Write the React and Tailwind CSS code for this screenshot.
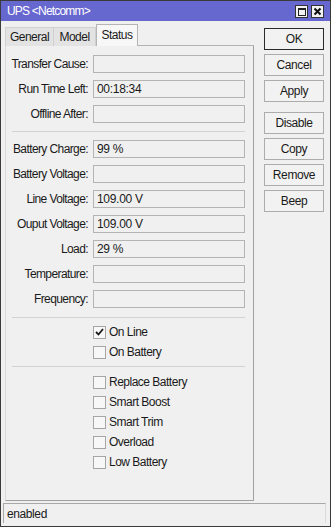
import React from "react";

const font = { fontFamily: '"Liberation Sans", Arial, sans-serif' };

function Field({ label, value }) {
  return (
    <div className="flex items-center h-[18px]">
      <div className="w-[82px] text-right text-[12px] tracking-[-0.6px] text-[#1a1a1a] leading-none">{label}</div>
      <div className="ml-[5px] w-[152px] h-[18px] border border-[#b4b4b4] bg-[#f0f0f0] flex items-center pl-[3px] text-[12px] tracking-[-0.3px] text-[#1a1a1a] leading-none">
        {value}
      </div>
    </div>
  );
}

function Check({ label, checked }) {
  return (
    <div className="flex items-center h-[20px] pl-[87px]">
      <div className="w-[13px] h-[13px] border border-[#a5a5a5] bg-[#f7f7f7] flex items-center justify-center">
        {checked && (
          <svg width="9" height="8" viewBox="0 0 9 8">
            <path d="M1 4 L3.5 6.5 L8 1" stroke="#1a1a1a" strokeWidth="1.8" fill="none" />
          </svg>
        )}
      </div>
      <div className="ml-[3px] text-[12px] tracking-[-0.5px] text-[#1a1a1a] leading-none">{label}</div>
    </div>
  );
}

function Sep() {
  return <div className="ml-[6px] w-[233px] border-t border-[#d2d2d2]" />;
}

function Btn({ children, def }) {
  return (
    <div
      className={
        "h-[22px] w-[60px] flex items-center justify-center text-[12px] tracking-[-0.4px] text-[#1a1a1a] leading-none bg-[#f2f2f2] border " +
        (def ? "border-[#2a2a2a]" : "border-[#acacac]")
      }
    >
      {children}
    </div>
  );
}

export default function App() {
  return (
    <div style={font} className="w-[331px] h-[527px] bg-[#f0f0f0] border border-[#3a3a3a] flex flex-col overflow-hidden">
      {/* Title bar */}
      <div className="h-[20px] bg-[#6767d0] flex items-center pl-[6px] pr-[6px] shrink-0">
        <div className="text-white text-[12px] tracking-[-0.8px] leading-none">UPS &lt;Netcomm&gt;</div>
        <div className="ml-auto flex gap-[3px] mt-[1px]">
          <div className="w-[13px] h-[13px] bg-[#f2f2f2] border border-[#333] flex items-center justify-center">
            <div className="w-[8px] h-[8px] border border-[#222] border-t-2" />
          </div>
          <div className="w-[13px] h-[13px] bg-[#f2f2f2] border border-[#333] flex items-center justify-center">
            <svg width="9" height="9" viewBox="0 0 9 9">
              <path d="M1.5 1.5 L7.5 7.5 M7.5 1.5 L1.5 7.5" stroke="#111" strokeWidth="2" />
            </svg>
          </div>
        </div>
      </div>

      {/* Body */}
      <div className="flex h-[480px] shrink-0">
        <div className="pl-[4px] flex flex-col">
          {/* Tabs */}
          <div className="h-[25px] flex items-end">
            <div className="w-[49px] h-[19px] bg-[#e3e3e3] border border-b-0 border-[#d0d0d0] flex items-center justify-center text-[12px] tracking-[-0.5px] text-[#1a1a1a] leading-none">
              General
            </div>
            <div className="w-[42px] h-[19px] bg-[#e3e3e3] border border-l-0 border-b-0 border-[#d0d0d0] flex items-center justify-center text-[12px] tracking-[-0.5px] text-[#1a1a1a] leading-none">
              Model
            </div>
            <div className="w-[42px] h-[22px] bg-[#f7f7f7] border border-b-0 border-[#b4b4b4] flex items-start pt-[4px] justify-center text-[12px] tracking-[-0.5px] text-[#1a1a1a] leading-none">
              Status
            </div>
            <div className="flex-1 border-b border-[#b4b4b4]" />
          </div>
          {/* Panel */}
          <div className="w-[249px] h-[455px] border border-t-0 border-l-[#d8d8d8] border-r-[#a0a0a0] border-b-[#a0a0a0] flex flex-col pt-[9px]">
            <div className="flex flex-col gap-[7px]">
              <Field label="Transfer Cause:" value="" />
              <Field label="Run Time Left:" value="00:18:34" />
              <Field label="Offline After:" value="" />
            </div>
            <div className="mt-[8px] mb-[8px]">
              <Sep />
            </div>
            <div className="flex flex-col gap-[7px]">
              <Field label="Battery Charge:" value="99 %" />
              <Field label="Battery Voltage:" value="" />
              <Field label="Line Voltage:" value="109.00 V" />
              <Field label="Ouput Voltage:" value="109.00 V" />
              <Field label="Load:" value="29 %" />
              <Field label="Temperature:" value="" />
              <Field label="Frequency:" value="" />
            </div>
            <div className="mt-[9px] mb-[4px]">
              <Sep />
            </div>
            <Check label="On Line" checked />
            <Check label="On Battery" />
            <div className="mt-[4px] mb-[5px]">
              <Sep />
            </div>
            <Check label="Replace Battery" />
            <Check label="Smart Boost" />
            <Check label="Smart Trim" />
            <Check label="Overload" />
            <Check label="Low Battery" />
          </div>
        </div>

        {/* Buttons */}
        <div className="ml-[10px] pt-[7px] flex flex-col">
          <div className="flex flex-col gap-[4px]">
            <Btn def>OK</Btn>
            <Btn>Cancel</Btn>
            <Btn>Apply</Btn>
          </div>
          <div className="mt-[10px] flex flex-col gap-[4px]">
            <Btn>Disable</Btn>
            <Btn>Copy</Btn>
            <Btn>Remove</Btn>
            <Btn>Beep</Btn>
          </div>
        </div>
      </div>

      {/* Status bar */}
      <div className="mt-[2px] ml-[2px] mr-[4px] h-[20px] border-t border-l border-t-[#a8a8a8] border-l-[#a8a8a8] border-r border-r-[#dcdcdc] flex items-center pl-[3px] text-[12px] tracking-[-0.4px] text-[#1a1a1a] leading-none shrink-0">
        enabled
      </div>
    </div>
  );
}
